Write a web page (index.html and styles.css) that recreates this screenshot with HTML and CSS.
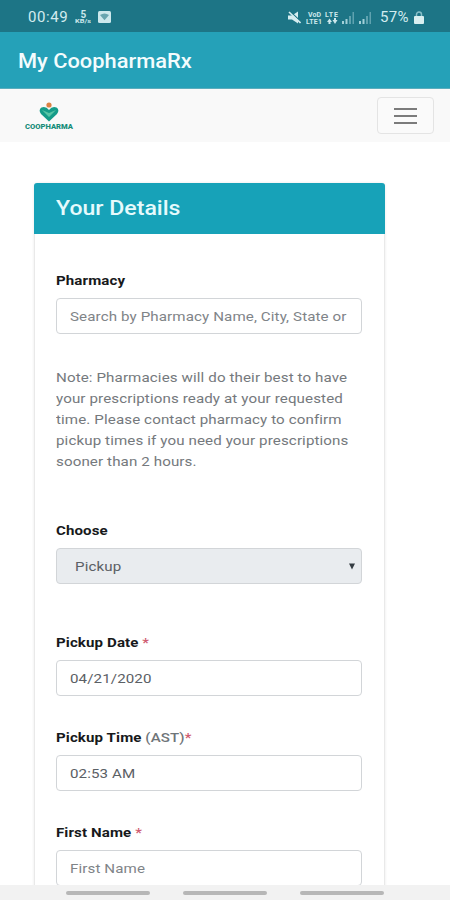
FILE: index.html
```html
<!DOCTYPE html>
<html lang="en">
<head>
<meta charset="utf-8">
<title>My CoopharmaRx</title>
<link rel="stylesheet" href="styles.css">
</head>
<body>
<div class="screen">
  <div class="status">
    <span class="clock">00:49</span>
    <svg class="net" width="16" height="16" viewBox="0 0 16 16"><text x="5.500" y="8.500" font-size="10" font-weight="700">5</text><text x="0" y="14" font-size="5.500" font-weight="700" textLength="16" lengthAdjust="spacingAndGlyphs">KB/s</text></svg>
    <svg class="msg" width="13" height="12" viewBox="0 0 13 12"><rect width="13" height="12" rx="1.500" fill="#cce8ec"/><path d="M2 4Q6.500 .8 11 4L6.500 9.300Z" fill="#67a5af"/></svg>
    <span class="grow"></span>
    <svg class="mute" width="13" height="13" viewBox="0 0 13 13"><path d="M0 4.500h4l6-4v12L4 8.500H0z" fill="#d5edf0"/><path d="M1.500 0l12 11" stroke="#1d7585" stroke-width="1.300"/><path d="M1 1l11.500 11" stroke="#d5edf0" stroke-width="1.600"/></svg>
    <svg class="lte" width="33" height="15" viewBox="0 0 33 15"><g font-size="7" font-weight="700"><text x="2" y="7" textLength="13">VoD</text><text x="0" y="14" textLength="16">LTE1</text><text x="19" y="7" textLength="13">LTE</text></g><path d="M21 12l2.500-3.500L26 12h-1.500v2h-2v-2zM26.500 10h1.500V8h2v2h1.500L29 14z" fill="#cce8ec"/></svg>
    <svg class="sig" width="29" height="13" viewBox="0 0 29 13"><path d="M0 10h2v3H0zM3.500 8h2v5h-2zM17 10h2v3h-2zM20.500 8h2v5h-2z" fill="#a2d0d8"/><path d="M7 5h2v8H7zM10.500 1h1.500v12h-1.500zM24 5h2v8h-2zM27.500 1H29v12h-1.500z" fill="#5fa2af"/></svg>
    <span class="pct">57%</span>
    <svg class="lock" width="10" height="13" viewBox="0 0 10 13"><path d="M2.500 6V3.500a2.500 2.500 0 0 1 5 0V6" fill="none" stroke="#87bfc8" stroke-width="1.500"/><rect y="5" width="10" height="8" rx="1" fill="#d9eff0"/></svg>
  </div>
  <header class="appbar"><span>My CoopharmaRx</span></header>
  <nav class="navbar">
    <svg class="logo" width="50" height="30" viewBox="0 0 50 30"><circle cx="25" cy="4" r="2.600" fill="#dc8245"/><path d="M25 20.500L17 13Q14 9 17.500 6.500Q22 5 25 9Q28 5 32.500 6.500Q36 9 33 13Z" fill="#149c89"/><path d="M18 9l7 7 7-7-7 3z" fill="#58c5a6"/><text x="1" y="27.500" font-size="7.500" font-weight="900" textLength="48" lengthAdjust="spacingAndGlyphs">COOPHARMA</text></svg>
    <button class="toggle" aria-label="Menu"><i></i><i></i><i></i></button>
  </nav>
  <main class="content">
    <section class="card">
      <h1 class="title"><span>Your Details</span></h1>
      <form class="form">
        <div class="group pharmacy"><label>Pharmacy</label><div class="field hint"><span>Search by Pharmacy Name, City, State or</span></div></div>
        <p class="note">Note: Pharmacies will do their best to have<br>your prescriptions ready at your requested<br>time. Please contact pharmacy to confirm<br>pickup times if you need your prescriptions<br>sooner than 2 hours.</p>
        <div class="group choose"><label>Choose</label><div class="field select"><span>Pickup</span><svg width="6" height="7" viewBox="0 0 6 7"><path d="M0 .5h6L3 6.500z" fill="#343c42"/></svg></div></div>
        <div class="group"><label>Pickup Date <b class="req">*</b></label><div class="field"><span>04/21/2020</span></div></div>
        <div class="group"><label>Pickup Time <span class="zone">(AST)</span><b class="req">*</b></label><div class="field"><span>02:53 AM</span></div></div>
        <div class="group"><label>First Name <b class="req">*</b></label><div class="field hint"><span>First Name</span></div></div>
      </form>
    </section>
  </main>
  <footer class="bottom"><i></i><i></i><i></i></footer>
</div>
</body>
</html>
```
FILE: styles.css
```css
* { box-sizing: border-box; }
body { margin: 0; font-family: Roboto, sans-serif; background: #fff; }
.screen { width: 450px; height: 900px; display: flex; flex-direction: column; overflow: hidden; }
svg { display: block; flex: none; }
svg text { fill: #cce8ec; font-family: Roboto, sans-serif; }
.logo text { fill: #168c79; }
.status { height: 32px; flex: none; display: flex; align-items: center; padding: 2px 26px 0 28px; background: #1d7586; color: #d3ecef; font-size: 15px; }
.clock { width: 47px; letter-spacing: .6px; }
.msg { margin-left: 7px; }
.grow { flex: 1; }
.lte { margin-left: 5px; }
.sig { margin-left: 3px; }
.pct { margin-left: 9px; width: 30px; letter-spacing: .3px; }
.lock { margin-left: 4px; }
.appbar { height: 57px; flex: none; background: #25a1b8; color: #f3fcfd; font-size: 19.5px; font-weight: 500; line-height: 60px; padding-left: 18px; border-bottom: 1px solid #5badbd; }
.appbar span, .title span, .field span { display: inline-block; transform-origin: left center; }
.appbar span { transform: scaleX(1.12); }
.navbar { height: 53px; flex: none; background: #f9f9f9; display: flex; justify-content: space-between; align-items: flex-start; padding: 8px 16px 0 24px; }
.logo { margin-top: 4px; }
.toggle { width: 57px; height: 37px; padding: 0; border: 1px solid #e4e4e4; border-radius: 4px; background: #fafafa; display: flex; flex-direction: column; align-items: center; justify-content: center; gap: 5px; }
.toggle i { width: 23px; height: 2px; background: #7b7b7b; }
.content { flex: 1; min-height: 0; overflow: hidden; padding: 41px 65px 0 34px; }
.card { height: 800px; background: #fff; border: 1px solid #e9e9e9; border-top: 0; border-radius: 4px; box-shadow: 0 0 3px #e9e9e9; }
.title { margin: 0 -1px; height: 51px; border-radius: 3px 3px 0 0; background: #17a2b8; color: #e6fafc; font-size: 21px; font-weight: 500; line-height: 51px; padding-left: 22px; }
.title span { transform: scaleX(1.1); }
.form { padding: 36px 22px 0 21px; }
.group { height: 95px; }
label { display: block; height: 28px; line-height: 21px; font-size: 13.5px; font-weight: 700; color: #17191b; letter-spacing: .1px; transform: scaleX(1.115); transform-origin: left center; }
.field { height: 36px; border: 1px solid #d2d5d8; border-radius: 4px; background: #fff; color: #5b6065; font-size: 13.5px; line-height: 34px; padding: 0 13px; letter-spacing: .1px; white-space: nowrap; }
.field span { transform: scaleX(1.12); }
.field.hint { color: #7f8488; }
.note { margin: 0; height: 154px; padding-top: 1px; font-size: 13.5px; line-height: 21.1px; letter-spacing: .1px; color: #75797d; white-space: nowrap; transform: scaleX(1.12); transform-origin: left center; }
.pharmacy { height: 96px; }
.choose { height: 112px; }
.field.select { background: #e9ecef; padding: 0 6px 0 18px; display: flex; align-items: center; justify-content: space-between; }
.req { color: #cf5b70; font-weight: 500; }
.zone { color: #6f7579; font-weight: 500; }
.bottom { height: 15px; flex: none; background: #f2f2f2; display: flex; gap: 33px; padding: 6px 0 0 66px; }
.bottom i { width: 84px; height: 4px; border-radius: 2px; background: #b7b7b7; }
```
